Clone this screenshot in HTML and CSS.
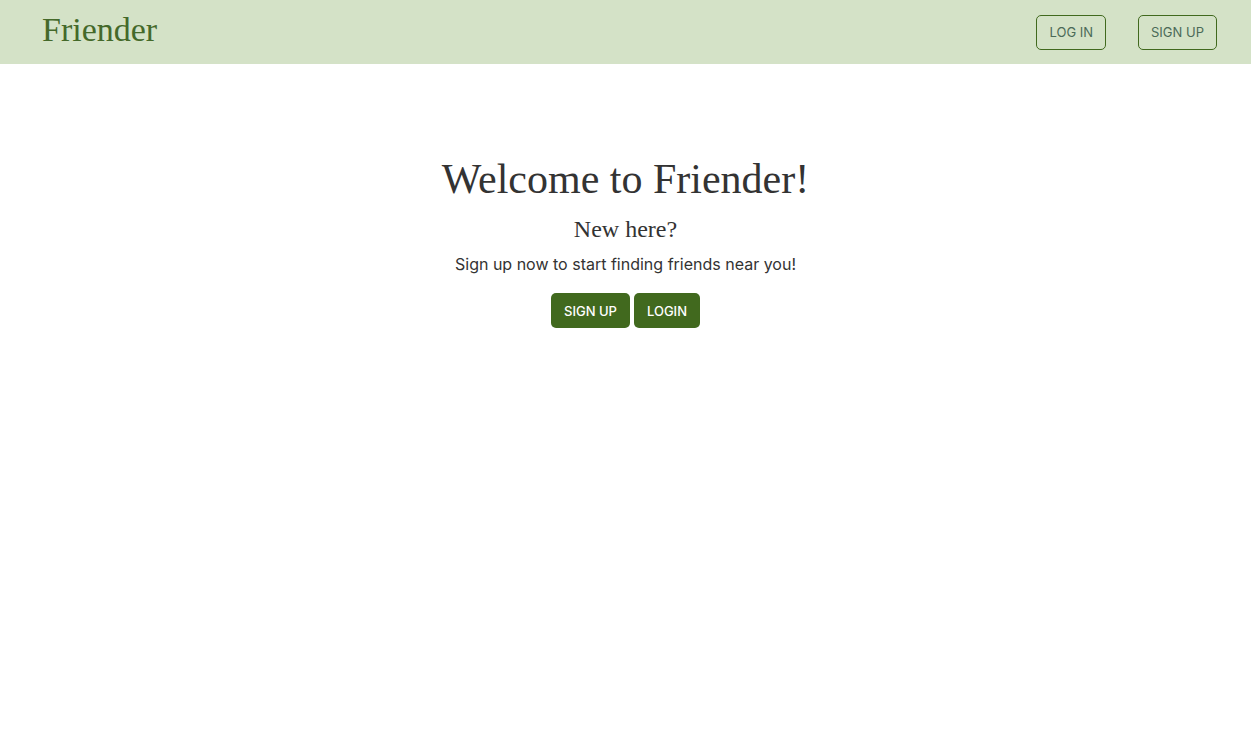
FILE: index.html
```html
<!DOCTYPE html>
<html lang="en">
<head>
<meta charset="utf-8">
<title>Friender</title>
<link rel="stylesheet" href="styles.css">
</head>
<body>
<header class="navbar">
  <a class="brand" href="#">Friender</a>
  <nav class="nav-links">
    <a class="nav-btn" href="#">LOG IN</a>
    <a class="nav-btn" href="#">SIGN UP</a>
  </nav>
</header>
<main class="hero">
  <h1 class="hero-title">Welcome to Friender!</h1>
  <h2 class="hero-sub">New here?</h2>
  <p class="hero-text">Sign up now to start finding friends near you!</p>
  <div class="hero-actions">
    <a class="btn" href="#">SIGN UP</a>
    <a class="btn" href="#">LOGIN</a>
  </div>
</main>
</body>
</html>
```

FILE: styles.css
```css
* { box-sizing: border-box; }
html, body { margin: 0; padding: 0; background: #fff; }
body { font-family: "Inter", "Liberation Sans", sans-serif; color: #333; }

.navbar {
  height: 64px;
  background: #d4e2c7;
  display: flex;
  align-items: center;
  justify-content: space-between;
  padding: 0 34px 0 42px;
}
.brand {
  font-family: "Liberation Serif", "DejaVu Serif", serif;
  font-size: 34px;
  color: #44692a;
  text-decoration: none;
  line-height: 1;
  margin-top: -4px;
}
.nav-links { display: flex; gap: 32px; }
.nav-btn {
  display: inline-flex;
  align-items: center;
  justify-content: center;
  height: 35px;
  padding: 0 12px;
  border: 1px solid #41691e;
  border-radius: 5px;
  font-size: 13px;
  color: #4b6a57;
  text-decoration: none;
}

.hero {
  display: flex;
  flex-direction: column;
  align-items: center;
  padding-top: 90px;
}
.hero-title {
  margin: 0;
  font-family: "Liberation Serif", "DejaVu Serif", serif;
  font-weight: normal;
  font-size: 42px;
  line-height: 50px;
  color: #333;
}
.hero-sub {
  margin: 10px 0 0;
  font-family: "Liberation Serif", "DejaVu Serif", serif;
  font-weight: normal;
  font-size: 24px;
  line-height: 30px;
  color: #333;
}
.hero-text {
  margin: 8px 0 0;
  font-size: 16px;
  line-height: 24px;
}
.hero-actions {
  display: flex;
  gap: 4px;
  margin-top: 17px;
}
.btn {
  display: inline-flex;
  align-items: center;
  height: 35px;
  padding: 0 13px;
  background: #41691e;
  color: #fff;
  border-radius: 5px;
  font-size: 13px;
  font-weight: 500;
  text-decoration: none;
}
```
